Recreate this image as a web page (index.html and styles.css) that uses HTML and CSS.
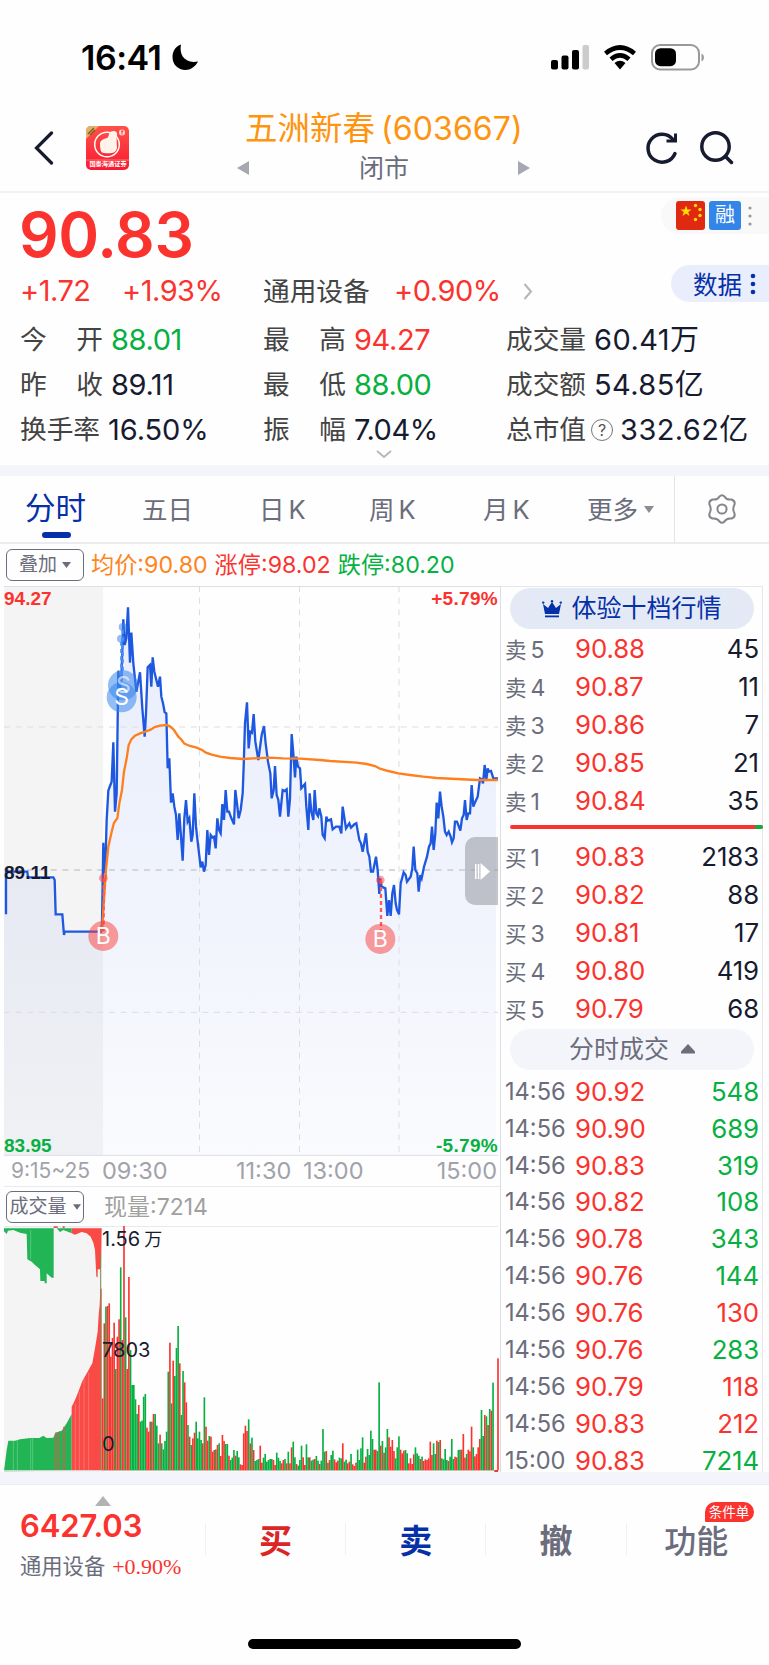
FILE: index.html
```
<!DOCTYPE html>
<html lang="zh-CN">

<head>
  <meta charset="UTF-8">
  <meta name="viewport" content="width=device-width, initial-scale=1.0">
  <title>五洲新春(603667)</title>
  <link rel="stylesheet" href="styles.css">
</head>

<body>
  <div class="status-bar">
    <span class="clock">16:41</span>
    <svg class="moon" width="27" height="26" viewBox="0 0 27 26"><path d="M9 0.5C7 10 12 20 26 17.500C23 23 18.500 26 13.500 26C6 26 0.500 20.500 0.500 13C0.500 7 4 2 9 0.500z"/></svg>
    <svg class="signal" width="38" height="25" viewBox="0 0 38 25"><rect y="15" width="7" height="9.500" rx="2"/><rect x="10.500" y="10.500" width="7" height="14" rx="2"/><rect x="21" y="5" width="7" height="19.500" rx="2"/><rect x="31.500" width="6.500" height="24.500" rx="2" fill="#ccc"/></svg>
    <svg class="wifi" width="34" height="25" viewBox="0 0 34 25"><path d="M2.500 8.500Q17 -3.500 31.500 8.500M8 14.200Q17 6.500 26 14.200" fill="none" stroke="#000" stroke-width="4.600"/><path d="M11.500 18Q17 13.500 22.500 18L17 24.500z"/></svg>
    <svg class="battery" width="54" height="27" viewBox="0 0 54 27"><rect x="1" y="1" width="47" height="24.500" rx="8" fill="none" stroke="#999" stroke-width="2"/><rect x="4" y="4.200" width="21" height="18" rx="5.500"/><path d="M50.500 9.500v8q2.500-1 2.500-4t-2.500-4z" fill="#999"/></svg>
  </div>

  <div class="nav-bar">
    <svg class="back" width="20" height="34" viewBox="0 0 20 34"><path d="M17.500 2L2.500 17L17.500 32" fill="none" stroke="#171b30" stroke-width="3.200" stroke-linecap="round"/></svg>
    <div class="app-icon">
      <svg width="43" height="44" viewBox="0 0 43 44"><path d="M0 0H13L0 13z" fill="#dfb16a"/><path d="M2 8L8 2M4 9L9 4" stroke="#8a5a25" stroke-width="1.500"/><circle cx="21" cy="18.500" r="12.300" fill="none" stroke="#fff" stroke-width="1.500"/><path d="M14 17C15 13 19 13 22 11.500C23 8 24 4.500 28 5C31 5.500 32 8 30.500 11L31 22C30 27 25 28 18 27C15 27 14 24 14 17z" fill="#fff3ea"/><circle cx="36" cy="6.500" r="3" fill="#ffd9d4"/><path d="M35 5h2.500M36 5v3.500" stroke="#f33" stroke-width="1"/><path d="M0 34H43" stroke="#ff7773" stroke-width="1"/></svg>
      <span>国泰海通证券</span>
    </div>
    <div class="stock-title">
      <h1>五洲新春<span>(603667)</span></h1>
      <div class="market-state">
        <svg width="13" height="14" viewBox="0 0 13 14"><path d="M12 0V14L0 7z"/></svg>
        <span>闭市</span>
        <svg width="13" height="14" viewBox="0 0 13 14"><path d="M0 0V14L12 7z"/></svg>
      </div>
    </div>
    <svg class="refresh" width="36" height="36" viewBox="0 0 36 36"><path d="M31 23.500A14 14 0 1 1 29 9.500" fill="none" stroke="#171b30" stroke-width="3.500" stroke-linecap="round"/><path d="M31.500 3.500V11H22.500" fill="none" stroke="#171b30" stroke-width="3"/></svg>
    <svg class="search" width="36" height="36" viewBox="0 0 36 36"><circle cx="16.500" cy="16.500" r="13.700" fill="none" stroke="#171b30" stroke-width="3.500"/><path d="M26.500 26.500L32.500 32.500" stroke="#171b30" stroke-width="3.500" stroke-linecap="round"/></svg>
  </div>

  <div class="quote">
    <div class="price red">90.83</div>
    <div class="change">
      <span class="red diff">+1.72</span><span class="red rate">+1.93%</span><span class="label sector">通用设备</span><span class="red sector-rate">+0.90%</span>
      <svg width="10" height="17" viewBox="0 0 10 17"><path d="M1.500 1L8 8.500L1.500 16" fill="none" stroke="#b5b5b5" stroke-width="2"/></svg>
    </div>
    <div class="stats">
      <div><span class="label spread"><i>今</i><i>开</i></span><b class="green">88.01</b></div>
      <div><span class="label spread"><i>最</i><i>高</i></span><b class="red">94.27</b></div>
      <div><span class="label">成交量</span><b class="wide">60.41万</b></div>
      <div><span class="label spread"><i>昨</i><i>收</i></span><b>89.11</b></div>
      <div><span class="label spread"><i>最</i><i>低</i></span><b class="green">88.00</b></div>
      <div><span class="label">成交额</span><b class="wide">54.85亿</b></div>
      <div><span class="label">换手率</span><b class="near">16.50%</b></div>
      <div><span class="label spread"><i>振</i><i>幅</i></span><b>7.04%</b></div>
      <div><span class="label">总市值</span><em class="help">?</em><b class="wide cap">332.62亿</b></div>
    </div>
    <svg class="expand" width="16" height="8" viewBox="0 0 16 8"><path d="M1 1L8 7L15 1" fill="none" stroke="#b5b5b5" stroke-width="1.800"/></svg>
    <div class="tags">
      <svg width="29" height="29" viewBox="0 0 29 29"><rect width="29" height="29" rx="3" fill="#df2910"/><path d="M10 4.500l1.400 4h4.200l-3.400 2.500 1.300 4L10 12.500 6.500 15l1.300-4L4.400 8.500h4.200z" fill="#ffde00"/><g fill="#ffde00"><circle cx="19.500" cy="4.500" r="1.700"/><circle cx="24" cy="8.500" r="1.700"/><circle cx="24" cy="14.500" r="1.700"/><circle cx="19.500" cy="18.500" r="1.700"/></g></svg>
      <span class="margin-tag">融</span>
      <svg width="4" height="20" viewBox="0 0 4 20" fill="#999"><circle cx="2" cy="2" r="1.600"/><circle cx="2" cy="10" r="1.600"/><circle cx="2" cy="18" r="1.600"/></svg>
    </div>
    <div class="data-btn">数据<svg width="6" height="22" viewBox="0 0 6 22" fill="#0530a8"><circle cx="3" cy="3" r="2.300"/><circle cx="3" cy="11" r="2.300"/><circle cx="3" cy="19" r="2.300"/></svg></div>
  </div>

  <div class="tabs">
    <span class="tab active">分时</span>
    <span class="tab">五日</span>
    <span class="tab">日<s>K</s></span>
    <span class="tab">周<s>K</s></span>
    <span class="tab">月<s>K</s></span>
    <span class="tab more">更多<svg width="10" height="7" viewBox="0 0 10 7"><path d="M0 0H10L5 7z" fill="#8b8b92"/></svg></span>
    <div class="settings">
      <svg width="30" height="30" viewBox="0 0 30 30" fill="none" stroke="#85858c" stroke-width="2"><path d="M12.500 2.500Q15 0 17.500 2.500Q19.500 6.200 24.500 5.500Q28.500 7 27.500 10.500Q25 15 27.500 19.500Q28.500 23 24.500 24.500Q19.500 23.800 17.500 27.500Q15 30 12.500 27.500Q10.500 23.800 5.500 24.500Q1.500 23 2.500 19.500Q5 15 2.500 10.500Q1.500 7 5.500 5.500Q10.500 6.200 12.500 2.500z"/><circle cx="15" cy="15" r="4.600"/></svg>
    </div>
  </div>

  <div class="legend">
    <span class="select">叠加<svg width="9" height="6" viewBox="0 0 9 6"><path d="M0 0H9L4.500 6z" fill="#6b6d7c"/></svg></span>
    <span class="orange">均价:90.80</span>
    <span class="red">涨停:98.02</span>
    <span class="green">跌停:80.20</span>
  </div>

  <div class="main">
    <div class="charts">
      <div class="price-chart">
        <svg width="496" height="570" viewBox="12 18 1488 1710">
          <defs>
            <linearGradient id="fill" x1="0" y1="82" x2="0" y2="1726" gradientUnits="userSpaceOnUse">
              <stop offset="0" stop-color="#2c5de5" stop-opacity="0.100"/>
              <stop offset="0.600" stop-color="#2c5de5" stop-opacity="0.060"/>
              <stop offset="1" stop-color="#2c5de5" stop-opacity="0.020"/>
            </linearGradient>
          </defs>
          <rect x="12" y="18" width="297" height="1710" fill="#f4f4f4"/>
          <polygon id="area" fill="url(#fill)"/>
          <g stroke="#dadde1" stroke-width="3" stroke-dasharray="18 17">
            <path d="M12 441H1494M12 1297H1494M598.500 18V1728M898.500 18V1728M1197 18V1728" fill="none"/>
          </g>
          <path d="M12 870H1494" stroke="#c8ccd3" stroke-width="5" stroke-dasharray="18 17"/>
          <path d="M12 19.500H1500M12 1726H1494" stroke="#dcdfe5" stroke-width="3"/>
          <polyline id="price-line" fill="none" stroke="#1f58e0" stroke-width="7"/>
          <polyline id="avg-line" fill="none" stroke="#ff7f1e" stroke-width="7"/>
          <g fill="#3b87ec" fill-opacity="0.550">
            <circle cx="368" cy="141" r="12"/><circle cx="363" cy="176" r="12"/>
            <circle cx="369" cy="316" r="45"/><circle cx="365" cy="352" r="45"/>
          </g>
          <path d="M368 150V280M364 185V310" stroke="#4c8fef" stroke-width="7" stroke-dasharray="12 10"/>
          <path d="M311 895V1055M1143 900V1055" stroke="#ff5c55" stroke-width="7" stroke-dasharray="12 9"/>
          <g fill="#fa3c3c" fill-opacity="0.500">
            <circle cx="310" cy="894" r="13"/><circle cx="1141" cy="900" r="13"/>
            <circle cx="310" cy="1068" r="45"/><circle cx="1141" cy="1077" r="45"/>
          </g>
          <g class="mark"><text x="370" y="340" opacity="0.600">S</text><text x="365" y="376">S</text><text x="310" y="1093">B</text><text x="1141" y="1101">B</text></g>
        </svg>
        <span class="axis top red">94.27</span>
        <span class="axis top right red">+5.79%</span>
        <span class="axis middle">89.11</span>
        <span class="axis bottom green">83.95</span>
        <span class="axis bottom right green">-5.79%</span>
        <span class="drawer"><svg width="15" height="17" viewBox="0 0 15 17" fill="#fff"><rect y="1" width="1.500" height="15"/><rect x="2.800" y="1" width="1.500" height="15"/><path d="M5.500 0L15 8.500L5.500 17z"/></svg></span>
      </div>
      <div class="times"><span class="auction">9:15~25</span><span class="t1">09:30</span><span class="t2">11:30</span><span class="t3">13:00</span><span class="t4">15:00</span></div>
      <div class="volume-head"><span class="select vol">成交量<svg width="8" height="6" viewBox="0 0 9 6"><path d="M0 0H9L4.500 6z" fill="#6b6d7c"/></svg></span><span>现量:7214</span></div>
      <div class="volume-chart">
        <svg width="496" height="246" viewBox="12 48 1488 738">
          <rect x="12" y="48" width="294" height="738" fill="#f4f4f4"/>
          <path d="M12 49H1494" stroke="#e3e6ec" stroke-width="3"/>
          <g fill="#22b555">
            <path d="M12 55V64L20 72L24 62L40 60L60 68L80 72L82 148L95 155L105 165L120 178L121 213H134V220H140V190L155 203H161V55z"/>
            <path d="M170 55L180 66L190 60L200 64L215 70V55z"/>
            <path d="M12 784L20 720L25 692H45L60 688L90 684H118L130 677L140 684L160 683L166 668L185 662L200 640L215 612V782z"/>
          </g>
          <g fill="#fa4a45">
            <path d="M215 55V70L225 74L245 66L260 70L272 80L280 98L285 120L289 200L293 202V178H303L305 55z"/>
            <path d="M215 782V590L225 570L235 545L247 513L262 487L277 460L285 415L293 365L296 315L299 285L301 236H305V782z"/>
            <path d="M161 49h12v5h-12zM188 49h6v5h-6zM166 668h4v114h-4zM190 650h4v132h-4zM178 664h2v118h-2z"/>
          </g>
          <path d="M40 690V780M52 690V780M92 684V780M98 684V780M226 580V780M238 545V780M252 505V780M266 487V780M92 60V148" stroke="#fff" stroke-opacity="0.350" stroke-width="2"/>
          <path d="M302 130V780" stroke="#7f8b4c" stroke-width="3"/>
          <path d="M12 782H1494" stroke="#dedfe5" stroke-width="3"/>
          <g id="bars"></g>
        </svg>
        <span class="vol-max">1.56<small>万</small></span>
        <span class="vol-mid">7803</span>
        <span class="vol-zero">0</span>
      </div>
    </div>

    <div class="side">
      <div class="pill promo"><svg width="20" height="18" viewBox="0 0 20 18" fill="#0530a8"><path d="M1 4L6 8L10 2L14 8L19 4L17 14H3z"/><rect x="3" y="15.500" width="14" height="1.800"/><circle cx="1.200" cy="2.600" r="1.200"/><circle cx="10" cy="1.200" r="1.200"/><circle cx="18.800" cy="2.600" r="1.200"/></svg>体验十档行情</div>
      <div class="book">
        <div><span>卖<u>5</u></span><b>90.88</b><em>45</em></div>
        <div><span>卖<u>4</u></span><b>90.87</b><em>11</em></div>
        <div><span>卖<u>3</u></span><b>90.86</b><em>7</em></div>
        <div><span>卖<u>2</u></span><b>90.85</b><em>21</em></div>
        <div><span>卖<u>1</u></span><b>90.84</b><em>35</em></div>
      </div>
      <div class="ratio"><i></i></div>
      <div class="book">
        <div><span>买<u>1</u></span><b>90.83</b><em>2183</em></div>
        <div><span>买<u>2</u></span><b>90.82</b><em>88</em></div>
        <div><span>买<u>3</u></span><b>90.81</b><em>17</em></div>
        <div><span>买<u>4</u></span><b>90.80</b><em>419</em></div>
        <div><span>买<u>5</u></span><b>90.79</b><em>68</em></div>
      </div>
      <div class="pill ticks-title">分时成交<svg width="14" height="10" viewBox="0 0 14 10"><path d="M7 0L14 7.500V9.500H0V7.500z" fill="#6b6d7c"/></svg></div>
      <div class="book ticks">
        <div><span>14:56</span><b>90.92</b><em class="green">548</em></div>
        <div><span>14:56</span><b>90.90</b><em class="green">689</em></div>
        <div><span>14:56</span><b>90.83</b><em class="green">319</em></div>
        <div><span>14:56</span><b>90.82</b><em class="green">108</em></div>
        <div><span>14:56</span><b>90.78</b><em class="green">343</em></div>
        <div><span>14:56</span><b>90.76</b><em class="green">144</em></div>
        <div><span>14:56</span><b>90.76</b><em class="red">130</em></div>
        <div><span>14:56</span><b>90.76</b><em class="green">283</em></div>
        <div><span>14:56</span><b>90.79</b><em class="red">118</em></div>
        <div><span>14:56</span><b>90.83</b><em class="red">212</em></div>
        <div><span>15:00</span><b>90.83</b><em class="green">7214</em></div>
      </div>
    </div>
  </div>

  <div class="bottom-bar">
    <div class="index">
      <svg width="16" height="10" viewBox="0 0 16 10"><path d="M8 0L16 10H0z" fill="#b3b3b3"/></svg>
      <div class="index-value red">6427.03</div>
      <div class="index-name">通用设备 <span class="red">+0.90%</span></div>
    </div>
    <div class="action buy">买</div>
    <div class="action sell">卖</div>
    <div class="action">撤</div>
    <div class="action func">功能<span class="badge">条件单</span></div>
  </div>
  <div class="home-indicator"></div>

  <script src="chart.js"></script>
</body>

</html>
```
FILE: styles.css
```
body {
  margin: 0;
  width: 769px;
  height: 1665px;
  overflow: hidden;
  background: #fefefe;
  color: #171b30;
  font-family: Inter, "Noto Sans CJK SC", sans-serif;
}

svg {
  display: block;
  flex: none;
}

i, em, b, s, u {
  font-style: normal;
  font-weight: 400;
  text-decoration: none;
}

.red {
  color: #fb332e;
}

.green {
  color: #06b041;
}

.orange {
  color: #ff8420;
}

/* 状态栏 */
.status-bar {
  display: flex;
  align-items: flex-start;
  height: 68px;
  padding: 44px 0 0 81px;
}

.clock {
  width: 91px;
  height: 26px;
  line-height: 27px;
  font-size: 34px;
  font-weight: 600;
  letter-spacing: -0.5px;
  color: #000;
}

.signal {
  margin: 1px 14px 0 352px;
}

.wifi {
  margin: 1px 14px 0 0;
}

/* 导航栏 */
.nav-bar {
  display: flex;
  height: 79px;
  border-bottom: 2px solid #f2f2f4;
}

.back {
  margin: 19px 0 0 34px;
}

.app-icon {
  position: relative;
  width: 43px;
  height: 44px;
  margin: 14px 0 0 32px;
  border-radius: 5px;
  background: linear-gradient(#ff5148, #f91a31);
  overflow: hidden;
}

.app-icon span {
  position: absolute;
  left: -8px;
  bottom: 1px;
  width: 60px;
  line-height: 10px;
  font-size: 10px;
  font-weight: 700;
  color: #fff;
  text-align: center;
  transform: scale(0.62);
}

.stock-title {
  width: 294px;
  margin-left: 108px;
}

.stock-title h1 {
  margin: 0;
  height: 38px;
  line-height: 33px;
  font-size: 32.5px;
  font-weight: 400;
  color: #ff9410;
  white-space: nowrap;
  padding-left: 8px;
}

.stock-title h1 span {
  margin-left: 6px;
  font-size: 32px;
  letter-spacing: 0.1px;
}

.market-state {
  display: flex;
  align-items: center;
  justify-content: space-between;
  height: 34px;
  line-height: 34px;
  margin-top: 1px;
  font-size: 25px;
  color: #6b6d7c;
  fill: #a6a8b0;
}

.refresh {
  margin: 18px 0 0 113px;
}

.search {
  margin: 18px 0 0 19px;
}

/* 行情概要 */
.quote {
  position: relative;
  height: 272px;
  border-bottom: 11px solid #f3f5fa;
}

.price {
  height: 79px;
  padding-left: 19px;
  line-height: 84px;
  font-size: 62px;
  font-weight: 600;
  letter-spacing: -0.3px;
}

.change {
  display: flex;
  align-items: center;
  height: 38px;
  padding-left: 20px;
  line-height: 38px;
  font-size: 29px;
  letter-spacing: -0.5px;
}

.label {
  color: #444;
  font-size: 26.7px;
  letter-spacing: 0;
}

.diff {
  width: 102px;
}

.rate {
  width: 141px;
}

.sector {
  width: 131px;
}

.sector-rate {
  width: 129px;
}

.stats {
  display: grid;
  grid-template-columns: 243px 243px 1fr;
  grid-auto-rows: 45px;
  padding: 7px 0 0 20px;
}

.stats div {
  display: flex;
  align-items: center;
  line-height: 45px;
}

.spread {
  display: flex;
  justify-content: space-between;
  width: 83px;
}

.stats b {
  margin-left: 8px;
  font-size: 29px;
  letter-spacing: -0.4px;
}

.stats .near {
  letter-spacing: -0.1px;
}

.stats .wide {
  letter-spacing: 0.4px;
}

.help {
  width: 20px;
  height: 20px;
  margin-left: 5px;
  border: 1.5px solid #777;
  border-radius: 50%;
  line-height: 20px;
  font-size: 16px;
  text-align: center;
  color: #555;
}

.stats .cap {
  margin-left: 7px;
}

.expand {
  position: absolute;
  left: 376px;
  top: 257px;
}

.tags {
  position: absolute;
  right: 0;
  top: 4px;
  display: flex;
  align-items: center;
  width: 93px;
  height: 37px;
  padding-left: 15px;
  border-radius: 19px 0 0 19px;
  background: #f9f9f9;
}

.margin-tag {
  width: 32px;
  height: 29px;
  margin: 0 7px 0 4px;
  border-radius: 3px;
  background: #3385e8;
  color: #fff;
  font-size: 20px;
  line-height: 28px;
  text-align: center;
}

.data-btn {
  position: absolute;
  right: 0;
  top: 72px;
  display: flex;
  align-items: center;
  width: 76px;
  height: 37px;
  padding-left: 22px;
  border-radius: 19px 0 0 19px;
  background: #eaeefc;
  color: #0530a8;
  font-size: 24.500px;
}

.data-btn svg {
  margin-left: 8px;
}

/* 周期切换 */
.tabs {
  display: flex;
  height: 66px;
  border-bottom: 2px solid #ececef;
  line-height: 67px;
  font-size: 25.5px;
  color: #6b6d7c;
}

.tab {
  position: relative;
  white-space: nowrap;
}

.tab s {
  margin-left: 4px;
  font-size: 25.5px;
}

.tab:nth-child(1) {
  width: 117px;
  padding-left: 25px;
  line-height: 64px;
}

.tab:nth-child(2) {
  width: 117px;
}

.tab:nth-child(3) {
  width: 110px;
}

.tab:nth-child(4) {
  width: 114px;
}

.tab:nth-child(5) {
  width: 104px;
}

.more {
  display: flex;
  align-items: center;
  gap: 6px;
  width: 87px;
}

.active {
  color: #0530a8;
  font-size: 30.5px;
}

.active::after {
  content: "";
  position: absolute;
  left: 42px;
  bottom: 4px;
  width: 29px;
  height: 6px;
  border-radius: 3px;
  background: #0530a8;
}

.settings {
  border-left: 1.5px solid #e3e4e8;
  padding: 18px 0 0 32px;
}

.legend {
  display: flex;
  align-items: center;
  gap: 7px;
  height: 42px;
  padding-left: 6px;
  font-size: 23.2px;
  line-height: 40px;
  white-space: nowrap;
}

.select {
  box-sizing: border-box;
  display: flex;
  align-items: center;
  justify-content: center;
  gap: 5px;
  width: 78px;
  height: 32px;
  border: 1.5px solid #6b6d7c;
  border-radius: 6px;
  font-size: 19px;
  line-height: 30px;
  color: #6b6d7c;
}

/* 图表区 */
.main {
  display: flex;
  height: 886px;
  border-bottom: 12px solid #f3f5fa;
}

.charts {
  width: 496px;
  padding-left: 4px;
  border-right: 1.5px solid #dcdde4;
}

.price-chart, .volume-chart {
  position: relative;
}

.mark text {
  fill: #fff;
  font-size: 69px;
  text-anchor: middle;
}

.axis {
  position: absolute;
  left: 0;
  font: bold 19px/22px "Liberation Sans", sans-serif;
}

.axis.top {
  top: 2px;
}

.axis.middle {
  top: 276px;
}

.axis.bottom {
  bottom: -1px;
}

.axis.right {
  left: auto;
  right: 2px;
  letter-spacing: 0.3px;
}

.drawer {
  position: absolute;
  right: 2px;
  top: 251px;
  display: flex;
  align-items: center;
  box-sizing: border-box;
  width: 33px;
  height: 68px;
  padding-left: 10px;
  border-radius: 10px 0 0 10px;
  background: rgba(150, 152, 158, 0.55);
}

.times {
  display: flex;
  height: 30px;
  border-bottom: 1.5px solid #e8e9ee;
  line-height: 30px;
  font-size: 23.5px;
  letter-spacing: 0;
  color: #a2a2aa;
}

.auction {
  width: 91px;
  padding-left: 7px;
  font-size: 21px;
}

.t1 {
  width: 134px;
}

.t2 {
  width: 67px;
}

.t3 {
  flex: 1;
}

.t4 {
  padding-right: 3px;
}

.volume-head {
  display: flex;
  align-items: center;
  height: 39px;
  padding-left: 2px;
  font-size: 23px;
  line-height: 38px;
  color: #a0a0a0;
}

.vol {
  gap: 6px;
  margin-right: 20px;
}

.volume-chart {
  height: 246px;
}

.volume-chart span {
  position: absolute;
  left: 98px;
  line-height: 24px;
  font-size: 20px;
}

.volume-chart small {
  margin-left: 4px;
  font-size: 18px;
}

.vol-max {
  top: 1px;
}

.vol-mid {
  top: 112px;
}

.vol-zero {
  top: 206px;
}

/* 五档与逐笔 */
.side {
  width: 261px;
  border-top: 1.5px solid #e6e7ea;
  border-right: 1.5px solid #e6e7ea;
}

.pill {
  display: flex;
  align-items: center;
  justify-content: center;
  gap: 9px;
  width: 244px;
  height: 41px;
  margin: 1px 0 0 9px;
  border-radius: 21px;
  background: #e4e9f6;
  font-size: 25px;
  line-height: 39px;
  color: #0530a8;
}

.book div {
  display: flex;
  align-items: center;
  height: 38.2px;
  padding: 0 3px 0 4px;
}

.book span {
  width: 70px;
  font-size: 21.5px;
  color: #6b6d7c;
  white-space: nowrap;
}

.book u {
  margin-left: 4px;
  font-size: 23px;
}

.book b {
  color: #fb332e;
}

.book b, .book em {
  font-size: 25.8px;
  letter-spacing: -0.1px;
}

.book em {
  margin-left: auto;
}

.ratio {
  width: 253px;
  height: 4px;
  margin: 5px 0 8px 9px;
  border-radius: 2px;
  background: #fb332e;
  overflow: hidden;
}

.ratio i {
  display: block;
  width: 8px;
  height: 4px;
  margin-left: auto;
  border-radius: 2px;
  background: #06b041;
}

.ticks-title {
  margin-top: 1px;
  gap: 12px;
  background: #f3f5fa;
  color: #6b6d7c;
}

.ticks {
  padding-top: 3px;
}

.ticks div {
  height: 36.9px;
}

.ticks span {
  font-size: 23.6px;
}

/* 底部交易栏 */
.bottom-bar {
  display: flex;
  height: 154px;
  border-top: 1.5px solid #ececf1;
}

.index {
  width: 205px;
}

.index svg {
  margin: 11px 0 0 95px;
}

.index-value {
  height: 36px;
  margin: 1px 0 0 20px;
  line-height: 38px;
  font-size: 31px;
  font-weight: 600;
  letter-spacing: -0.1px;
}

.index-name {
  margin: 8px 0 0 20px;
  line-height: 30px;
  font-size: 21.3px;
  color: #6b6d7c;
  white-space: nowrap;
}

.index-name span {
  margin-left: 1px;
  font-family: "Liberation Serif", serif;
  font-size: 22px;
}

.action {
  position: relative;
  width: 139.2px;
  height: 32px;
  margin-top: 38px;
  border-left: 1.5px solid #eef0f6;
  line-height: 37px;
  font-size: 33px;
  font-weight: 700;
  text-align: center;
  color: #6b6d7c;
}

.buy {
  color: #dc2626;
}

.sell {
  color: #0530a8;
}

.func {
  font-size: 32px;
  font-weight: 500;
}

.badge {
  position: absolute;
  left: 78px;
  top: -21px;
  width: 49px;
  height: 20px;
  border-radius: 10px 10px 10px 1px;
  background: #fb332e;
  color: #fff;
  font-size: 13.5px;
  font-weight: 400;
  line-height: 20px;
}

.home-indicator {
  width: 273px;
  height: 10px;
  margin-left: 248px;
  border-radius: 5px;
  background: #000;
}
```
FILE: chart.js
```
// 分时价格与均价
const price = "18,1003 18,875 82,875 84,892 160,892 164,900 167,1003 187,1003 192,1065 194,1055 303,1055 306,1030 310,788 313,880 316,860 320,720 325,632 330,618 335,605 340,487 345,695 350,640 355,272 359,330 364,300 370,118 374,195 379,175 384,82 390,248 394,158 400,250 409,335 414,310 420,277 427,385 434,470 438,400 443,262 450,255 454,320 458,232 463,275 474,320 480,290 484,350 489,370 494,397 499,400 503,565 508,535 513,668 518,640 523,680 528,705 533,780 538,700 543,770 548,842 553,715 558,660 563,725 568,715 574,785 578,765 583,640 588,740 593,785 602,862 607,845 612,875 617,855 622,750 627,825 632,765 637,772 642,770 647,805 652,715 657,750 662,760 667,672 672,720 677,630 682,695 687,695 693,712 702,733 706,630 711,670 716,715 722,690 728,640 731,560 735,430 741,367 746,505 751,455 756,458 761,402 766,485 775,540 785,465 792,438 797,490 804,545 811,580 815,655 821,630 825,558 830,645 835,660 840,710 848,630 854,633 860,628 865,710 870,655 875,462 880,520 885,592 889,530 894,560 900,565 904,625 915,612 919,680 925,750 929,640 934,695 940,720 944,630 949,700 954,708 958,685 964,710 968,765 974,775 979,710 983,722 993,718 998,748 1008,740 1018,740 1024,760 1028,680 1038,745 1048,730 1053,743 1063,733 1069,730 1078,780 1083,790 1088,815 1098,760 1103,815 1108,830 1113,875 1119,875 1128,830 1133,870 1138,942 1141,895 1145,920 1156,925 1162,1008 1167,960 1172,1008 1177,940 1182,915 1187,970 1191,990 1197,1003 1202,910 1211,877 1217,885 1221,905 1232,890 1237,865 1241,800 1246,870 1252,880 1256,935 1261,885 1265,895 1272,860 1281,830 1287,800 1292,790 1296,740 1301,810 1306,760 1310,668 1315,715 1320,635 1325,680 1330,710 1335,755 1340,765 1346,755 1352,770 1356,787 1361,775 1365,725 1371,725 1381,752 1386,715 1391,705 1395,660 1400,720 1405,700 1410,700 1415,615 1420,680 1426,665 1433,650 1440,595 1445,598 1449,610 1454,555 1459,600 1463,565 1467,575 1473,573 1480,595 1494,595";
const avg = "306,1055 312,960 318,870 325,800 335,755 342,728 352,715 358,670 366,630 372,575 380,535 386,495 394,478 405,467 420,460 436,455 452,449 464,441 480,437 500,435 510,439 522,450 535,470 545,480 553,491 570,498 590,503 606,510 618,518 635,524 660,530 690,534 730,537 760,535 810,533 850,535 900,536 960,540 990,543 1070,548 1100,552 1125,558 1140,566 1165,573 1195,580 1230,585 1270,590 1310,594 1370,597 1430,600 1494,600";

document.getElementById("price-line").setAttribute("points", price);
document.getElementById("area").setAttribute("points", price + " 1488,595 1488,1726 12,1726 12,875");
document.getElementById("avg-line").setAttribute("points", avg);

// 每分钟成交量：r 红 g 绿
const morning = "r215 r440 g490 r492 r500 r340 r396 r442 g303 r400 r452 g608 r390 r732 g458 r303 r579 g360 g255 g255 g212 g168 r195 g145 g148 g220 g228 r127 r115 r145 g145 r168 g168 g133 g80 r106 g80 g62 g87 g115 g295 r382 g200 r328 g282 g366 g432 r320 g165 g297 r263 r203 g135 r100 g75 r95 r112 g145 g95 g115 g90 r80 g218 r130 r88 g102 r100 r55 r60 g62 r75 g80 r42 r105 r87 g78 g78 r43 g30 g37 g60 r43 g57 g38 r17 r15 r110 r133 r117 g152";
const rest = "r80 g97 r60 g27 g30 g33 r73 r22 g37 g48 g25 g30 g33 g33 r30 r15 g52 g37 g27 r20 r30 g33 r20 g55 r20 r68 g85 g38 r18 g13 g30 g73 r38 r15 g77 g38 r38 g28 g31 r33 g42 g28 r18 g28 g123 g55 r57 g22 r30 g45 g58 r32 r23 r28 g37 g35 r80 g25 g31 r20 r25 g48 r17 r12 r22 g61 g30 g65 g98 r22 r40 g63 g45 g118 g93 r61 r61 g57 g263 r73 g87 r52 g68 g123 r98 r70 r90 r57 g35 g68 g101 r61 r50 r58 g60 g50 r20 r35 r18 r47 g68 g50 g43 r33 g40 r27 r32 r30 r35 r85 r45 g80 g48 r88 g84 r90 g35 g32 g63 g30 r27 g40 g93 g33 r40 r38 g60 g61 r61 r108 r37 g48 r61 r56 r130 g68 r41 r48 r68 r93 g180 g102 r165 g161 r135 g183 r178 g262 r0 r0 r335";

function drawBars(data, from, to) {
  const items = data.split(" ");
  const step = (to - from) / (items.length - 1);
  let bars = "";
  items.forEach((item, i) => {
    const h = Number(item.slice(1));
    if (h === 0) return;
    const color = item[0] === "r" ? "#fb332e" : "#06b041";
    const x = from + i * step - step / 2;
    bars += `<rect x="${x}" y="${780 - h}" width="${step}" height="${h + 1}" fill="${color}"/>`;
  });
  return bars;
}

document.getElementById("bars").innerHTML = drawBars(morning, 308, 746) + drawBars(rest, 751, 1494)
  + '<rect x="1483" y="780" width="11" height="6" fill="#fb332e"/>';
```
